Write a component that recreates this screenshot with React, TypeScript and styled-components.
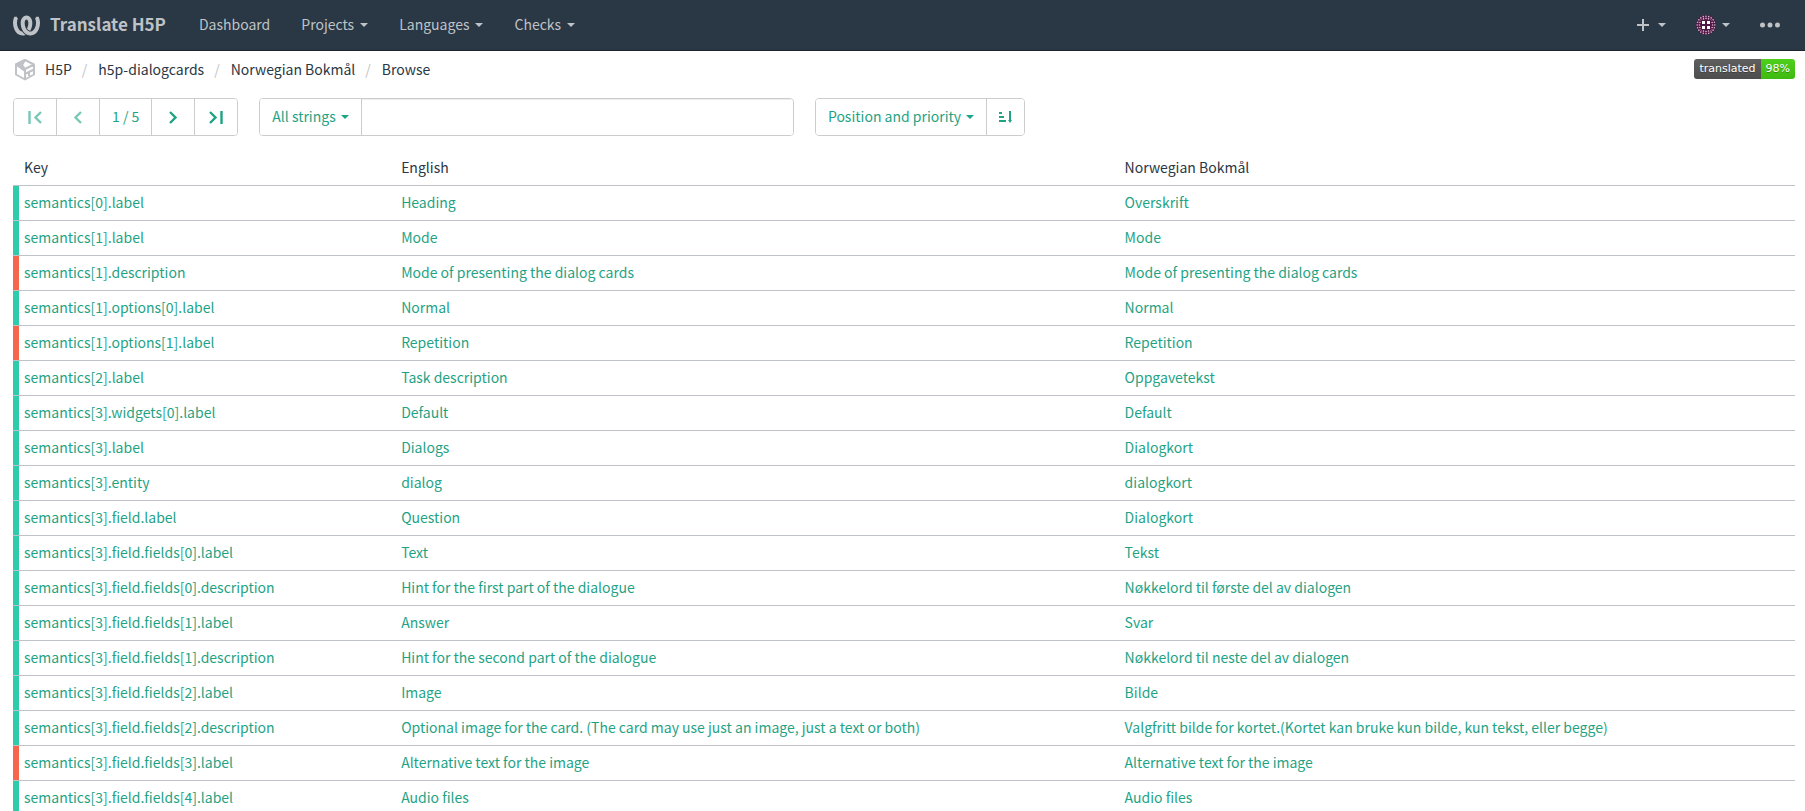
import React from "react";
import styled, { createGlobalStyle } from "styled-components";
import { SiWeblate } from "react-icons/si";

const Global = createGlobalStyle`
  * { box-sizing: border-box; }
  html { overflow: hidden; }
  body {
    margin: 0;
    background: #fff;
    color: #2a3744;
    font-family: "Noto Sans CJK SC", "Noto Sans", sans-serif;
    font-size: 14px;
    line-height: 20px;
  }
  button, input { font: inherit; }
  a { color: inherit; text-decoration: none; }
`;

const Navbar = styled.header`
  display: flex;
  align-items: center;
  height: 51px;
  padding: 0 10px 0 13px;
  background: #2a3744;
  border-bottom: 1px solid #1c252e;
  color: #bfc3c7;
`;

const Brand = styled.a`
  display: flex;
  align-items: center;
  gap: 10px;
  margin-right: 18px;
  font-size: 17px;
  font-weight: 700;
`;

const Label = styled.span`
  padding-bottom: 2px;
`;

const Menu = styled.nav`
  display: flex;
  flex: 1;
  gap: 1px;
`;

const MenuLink = styled.a`
  display: flex;
  padding: 0 15px;
`;

const MenuButton = styled.button<{ $gap?: number }>`
  display: flex;
  align-items: center;
  gap: ${(p) => p.$gap ?? 6}px;
  padding: 0 15px;
  border: 0;
  background: none;
  color: inherit;
  line-height: 20px;
`;

const Caret = styled.span`
  width: 0;
  height: 0;
  border: 4px solid transparent;
  border-top-color: currentColor;
  border-bottom: 0;
`;

const Tools = styled.div`
  display: flex;
  align-items: center;
`;

const Crumbs = styled.div`
  display: flex;
  align-items: center;
  justify-content: space-between;
  height: 36px;
  padding: 0 10px 0 13px;
`;

const Trail = styled.ol`
  display: flex;
  align-items: center;
  margin: 0;
  padding: 0;
  list-style: none;
`;

const Crumb = styled.li`
  display: flex;
  align-items: center;
  gap: 8px;
  & + &::before {
    content: "/";
    padding: 0 3px 0 10px;
    color: #bfc3c7;
  }
`;

const Badge = styled.a`
  display: flex;
  border-radius: 3px;
  overflow: hidden;
  color: #fff;
  font: 11px/20px "DejaVu Sans", Verdana, sans-serif;
  text-shadow: 0 1px 0 rgba(1, 1, 1, 0.3);
`;

const BadgePart = styled.span<{ $tone: "label" | "value" }>`
  padding: 0 5px;
  background: ${(p) =>
    p.$tone === "label"
      ? "linear-gradient(#5f5f5f, #4d4d4d)"
      : "linear-gradient(#4fcf1c, #3fb90f)"};
`;

const Toolbar = styled.div`
  display: flex;
  gap: 21px;
  padding: 11px 10px 10px 13px;
`;

const Group = styled.div<{ $width?: string }>`
  display: flex;
  width: ${(p) => p.$width ?? "auto"};
  height: 38px;
  border: 1px solid #ccc;
  border-radius: 4px;
  overflow: hidden;
`;

const ToolButton = styled.button`
  display: flex;
  align-items: center;
  justify-content: center;
  gap: 5px;
  padding: 0 12px;
  border: 0;
  background: #fff;
  color: #1fa385;
  white-space: nowrap;
  & + & { border-left: 1px solid #ccc; }
  &:disabled { color: #79c8b6; }
`;

const Search = styled.input`
  flex: 1;
  min-width: 0;
  border: 0;
  border-left: 1px solid #ccc;
  background: #fff;
  box-shadow: inset 0 1px 1px rgba(0, 0, 0, 0.075);
  outline: 0;
`;

const TableWrap = styled.main`
  padding: 0 10px 0 13px;
`;

const Table = styled.table`
  width: 100%;
  border-collapse: separate;
  border-spacing: 0;
  table-layout: fixed;
`;

const Head = styled.th<{ $width?: string }>`
  width: ${(p) => p.$width ?? "auto"};
  height: 40px;
  padding: 2px 5px 0;
  border-bottom: 1px solid #bfc3c7;
  font-weight: 400;
  text-align: left;
  &:first-child { padding-left: 11px; }
`;

const Cell = styled.td`
  height: 35px;
  padding: 0 5px 2px;
  border-bottom: 1px solid #bfc3c7;
  color: #1fa385;
`;

const KeyCell = styled(Cell)<{ $alert: boolean }>`
  padding-left: 11px;
  background: linear-gradient(${(p) => (p.$alert ? "#f6664c, #f6664c" : "#2eccaa, #2eccaa")}) 0 0 / 6px 100% no-repeat;
`;

type Row = [key: string, english: string, norwegian: string, alert?: boolean];

const rows: Row[] = [
  ["semantics[0].label", "Heading", "Overskrift"],
  ["semantics[1].label", "Mode", "Mode"],
  ["semantics[1].description", "Mode of presenting the dialog cards", "Mode of presenting the dialog cards", true],
  ["semantics[1].options[0].label", "Normal", "Normal"],
  ["semantics[1].options[1].label", "Repetition", "Repetition", true],
  ["semantics[2].label", "Task description", "Oppgavetekst"],
  ["semantics[3].widgets[0].label", "Default", "Default"],
  ["semantics[3].label", "Dialogs", "Dialogkort"],
  ["semantics[3].entity", "dialog", "dialogkort"],
  ["semantics[3].field.label", "Question", "Dialogkort"],
  ["semantics[3].field.fields[0].label", "Text", "Tekst"],
  ["semantics[3].field.fields[0].description", "Hint for the first part of the dialogue", "Nøkkelord til første del av dialogen"],
  ["semantics[3].field.fields[1].label", "Answer", "Svar"],
  ["semantics[3].field.fields[1].description", "Hint for the second part of the dialogue", "Nøkkelord til neste del av dialogen"],
  ["semantics[3].field.fields[2].label", "Image", "Bilde"],
  ["semantics[3].field.fields[2].description", "Optional image for the card. (The card may use just an image, just a text or both)", "Valgfritt bilde for kortet.(Kortet kan bruke kun bilde, kun tekst, eller begge)"],
  ["semantics[3].field.fields[3].label", "Alternative text for the image", "Alternative text for the image", true],
  ["semantics[3].field.fields[4].label", "Audio files", "Audio files"],
];

const Cube = () => (
  <svg width="24" height="24" viewBox="0 0 24 24" fill="none" stroke="#bfc3c7" strokeWidth="2" strokeLinejoin="round" aria-hidden="true">
    <path d="M12 3l9 4.500v10l-9 5-9-5V7.500zM12 12v10.500M12 12l9-4.500" />
    <path d="M3 7.500l9-4.500-3 5 3 4v2z" fill="#bfc3c7" />
    <path d="M12 17l9-4.500M16 19v-4" />
  </svg>
);

const NavIcon = ({ flip = false, bar = false }: { flip?: boolean; bar?: boolean }) => (
  <svg width="18" height="18" viewBox="0 0 18 18" fill="none" stroke="currentColor" strokeWidth="2.400" aria-hidden="true">
    <g transform={flip ? "translate(18 0) scale(-1 1)" : undefined}>
      <path d={bar ? "M15 4L9.500 9.500 15 15" : "M12 4L6.500 9.500 12 15"} />
      {bar && <path d="M3.500 3v13" />}
    </g>
  </svg>
);

const ringDots = (count: number, radius: number) =>
  Array.from({ length: count }, (_, i) => {
    const a = (i / count) * Math.PI * 2;
    return <circle key={`${radius}-${i}`} cx={10 + Math.cos(a) * radius} cy={10 + Math.sin(a) * radius} r="0.8" />;
  });

const Avatar = () => (
  <svg width="20" height="20" viewBox="0 0 20 20" aria-hidden="true">
    <circle cx="10" cy="10" r="10" fill="#4f1744" />
    <g fill="#d9b7cf">{ringDots(20, 8.8)}{ringDots(16, 6.6)}</g>
    <path d="M5 5h10v10H5z" fill="#4f1744" />
    <path d="M6 6h3v3H6zM11 6h3v3h-3zM6 11h3v3H6zM11 11h3v3h-3z" fill="#fff" />
  </svg>
);

export default function App() {
  return (
    <>
      <Global />
      <Navbar>
        <Brand href="#"><SiWeblate size={27} aria-hidden="true" /><Label>Translate H5P</Label></Brand>
        <Menu>
          <MenuLink href="#"><Label>Dashboard</Label></MenuLink>
          <MenuButton><Label>Projects</Label><Caret /></MenuButton>
          <MenuButton><Label>Languages</Label><Caret /></MenuButton>
          <MenuButton><Label>Checks</Label><Caret /></MenuButton>
        </Menu>
        <Tools>
          <MenuButton $gap={9} aria-label="Add">
            <svg width="12" height="12" viewBox="0 0 12 12" fill="none" stroke="currentColor" strokeWidth="2"><path d="M6 0v12M0 6h12" /></svg>
            <Caret />
          </MenuButton>
          <MenuButton aria-label="Account"><Avatar /><Caret /></MenuButton>
          <MenuButton aria-label="More">
            <svg width="20" height="6" viewBox="0 0 20 6" fill="currentColor"><circle cx="2.500" cy="3" r="2.500" /><circle cx="10" cy="3" r="2.500" /><circle cx="17.500" cy="3" r="2.500" /></svg>
          </MenuButton>
        </Tools>
      </Navbar>
      <Crumbs>
        <Trail>
          <Crumb><Cube /><a href="#">H5P</a></Crumb>
          <Crumb><a href="#">h5p-dialogcards</a></Crumb>
          <Crumb><a href="#">Norwegian Bokmål</a></Crumb>
          <Crumb><a href="#">Browse</a></Crumb>
        </Trail>
        <Badge href="#">
          <BadgePart $tone="label">translated</BadgePart>
          <BadgePart $tone="value">98%</BadgePart>
        </Badge>
      </Crumbs>
      <Toolbar>
        <Group>
          <ToolButton disabled aria-label="First"><NavIcon bar /></ToolButton>
          <ToolButton disabled aria-label="Previous"><NavIcon /></ToolButton>
          <ToolButton><Label>1 / 5</Label></ToolButton>
          <ToolButton aria-label="Next"><NavIcon flip /></ToolButton>
          <ToolButton aria-label="Last"><NavIcon flip bar /></ToolButton>
        </Group>
        <Group $width="30%">
          <ToolButton><Label>All strings</Label><Caret /></ToolButton>
          <Search type="text" aria-label="Search" />
        </Group>
        <Group>
          <ToolButton><Label>Position and priority</Label><Caret /></ToolButton>
          <ToolButton aria-label="Sort direction">
            <svg width="13" height="12" viewBox="0 0 13 12" fill="currentColor"><path d="M0 1h3v2H0zM0 5h5v2H0zM0 9h7v2H0zM10 0h2v9h1l-2 3-2-3h1z" /></svg>
          </ToolButton>
        </Group>
      </Toolbar>
      <TableWrap>
        <Table>
          <thead>
            <tr><Head $width="21.500%">Key</Head><Head $width="40.600%">English</Head><Head>Norwegian Bokmål</Head></tr>
          </thead>
          <tbody>
            {rows.map(([key, english, norwegian, alert]) => (
              <tr key={key}>
                <KeyCell $alert={!!alert}><a href="#">{key}</a></KeyCell>
                <Cell><a href="#">{english}</a></Cell>
                <Cell><a href="#">{norwegian}</a></Cell>
              </tr>
            ))}
          </tbody>
        </Table>
      </TableWrap>
    </>
  );
}
